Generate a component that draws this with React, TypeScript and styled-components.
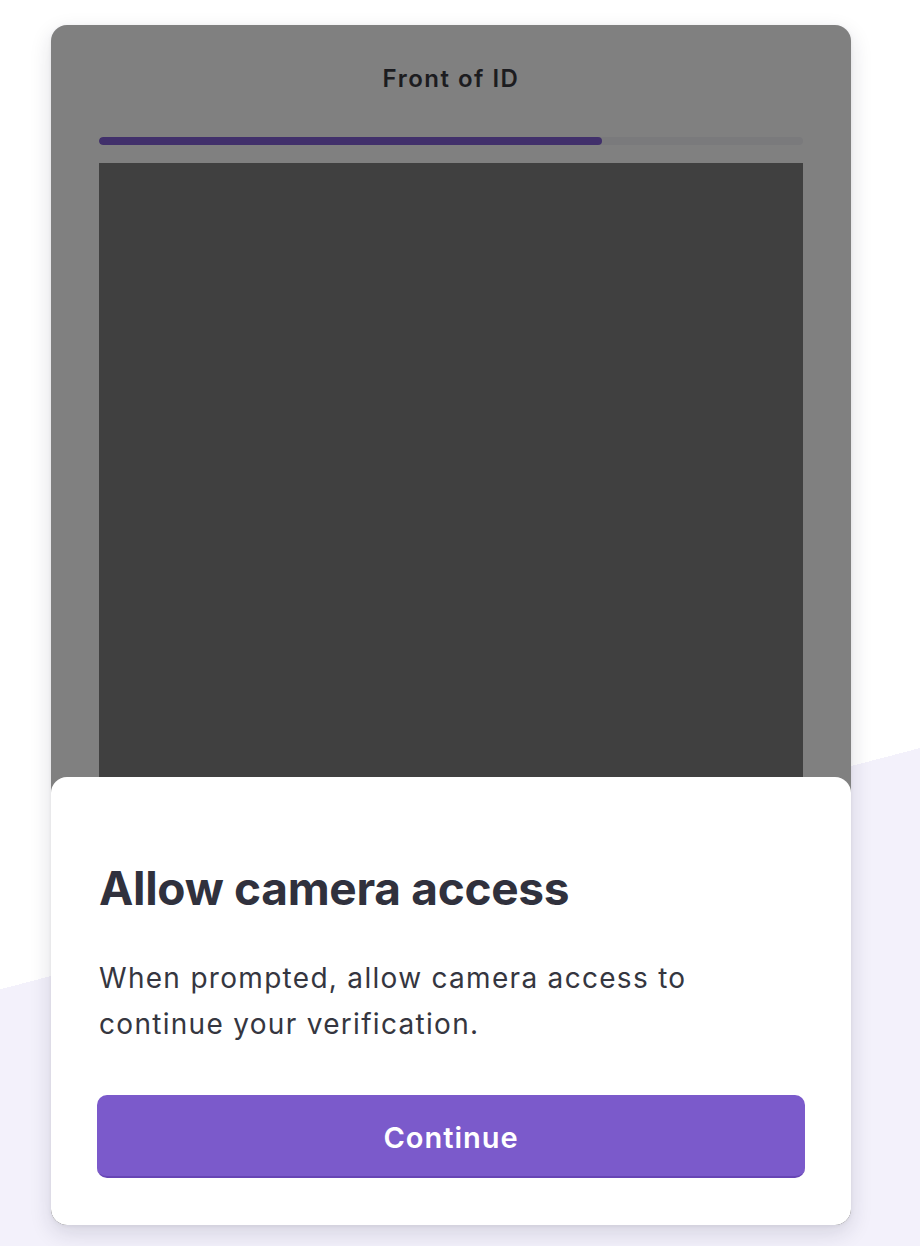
import React from "react";
import styled, { createGlobalStyle } from "styled-components";

const GlobalStyle = createGlobalStyle`
  html, body {
    margin: 0;
    padding: 0;
  }
  body {
    font-family: Inter, "Noto Sans", "Liberation Sans", sans-serif;
    -webkit-font-smoothing: antialiased;
  }
`;

const Page = styled.div`
  min-height: 100vh;
  box-sizing: border-box;
  padding: 25px 0 0 51px;
  background: linear-gradient(165.3deg, #ffffff 957px, #f3f1fb 957px);
`;

const Card = styled.div`
  width: 800px;
  display: flex;
  flex-direction: column;
  background: #808080;
  border-radius: 16px;
  overflow: hidden;
  box-shadow: 0 8px 22px rgba(30, 30, 60, 0.14), 0 1px 4px rgba(0, 0, 0, 0.06);
`;

const Header = styled.div`
  padding: 40px 48px 0;
  display: flex;
  flex-direction: column;
`;

const StepTitle = styled.h2`
  margin: 0 0 44px;
  text-align: center;
  font-size: 24px;
  line-height: 28px;
  font-weight: 600;
  letter-spacing: 1.5px;
  color: #1c1c20;
`;

const Track = styled.div`
  height: 8px;
  border-radius: 4px;
  background: #7a7a7c;
  overflow: hidden;
`;

const Fill = styled.div`
  height: 100%;
  border-radius: 4px;
  background: #41306b;
`;

const Camera = styled.div`
  margin: 18px 48px 0;
  height: 614px;
  background: #404040;
`;

const Sheet = styled.div`
  background: #ffffff;
  border-radius: 16px;
  padding: 86px 46px 47px;
  display: flex;
  flex-direction: column;
`;

const SheetTitle = styled.h1`
  margin: 0 0 0 2px;
  font-size: 46px;
  line-height: 50px;
  font-weight: 700;
  letter-spacing: -0.3px;
  color: #30313d;
`;

const SheetText = styled.p`
  margin: 42px 0 0 2px;
  font-size: 28px;
  line-height: 46px;
  font-weight: 400;
  letter-spacing: 1.3px;
  color: #353640;
  max-width: 620px;
`;

const PrimaryButton = styled.button`
  margin-top: 48px;
  height: 83px;
  width: 100%;
  box-sizing: border-box;
  border: none;
  border-bottom: 2px solid #6745b5;
  border-radius: 10px;
  background: #7b5acb;
  color: #ffffff;
  font-family: inherit;
  font-size: 29px;
  font-weight: 600;
  letter-spacing: 1px;
  padding-top: 4px;
  cursor: pointer;
`;

export default function App() {
  const progress = 5 / 7;
  return (
    <>
      <GlobalStyle />
      <Page>
        <Card>
          <Header>
            <StepTitle>Front of ID</StepTitle>
            <Track>
              <Fill style={{ width: `${progress * 100}%` }} />
            </Track>
          </Header>
          <Camera />
          <Sheet>
            <SheetTitle>Allow camera access</SheetTitle>
            <SheetText>
              When prompted, allow camera access to continue your verification.
            </SheetText>
            <PrimaryButton>Continue</PrimaryButton>
          </Sheet>
        </Card>
      </Page>
    </>
  );
}
